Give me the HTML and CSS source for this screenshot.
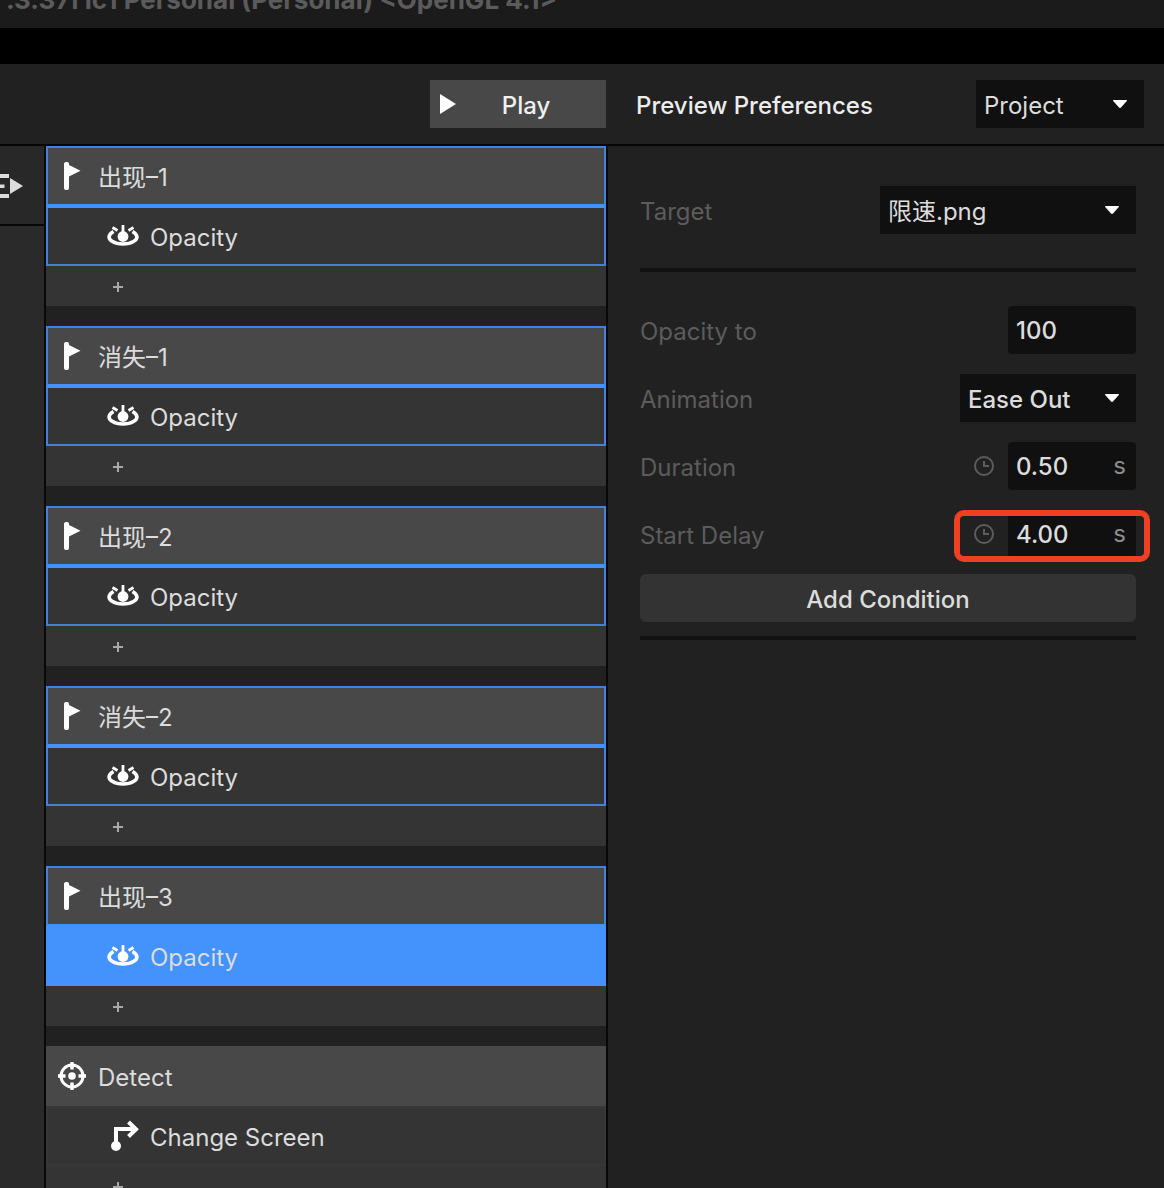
FILE: index.html
```html
<!DOCTYPE html>
<html lang="en">
<head>
<meta charset="utf-8">
<meta name="viewport" content="width=device-width, initial-scale=1">
<title>Interaction editor</title>
<link rel="stylesheet" href="styles.css">
</head>
<body>
<svg class="sprite" aria-hidden="true">
  <symbol id="flag" viewBox="0 0 28 28">
    <rect x="6" y="0" width="5" height="28" rx="2"/>
    <path d="M11 3L22.500 8.800L11 14.500z"/>
  </symbol>
  <symbol id="eye" viewBox="0 0 34 24">
    <path d="M7.500 7.500C1.500 11 2 15 6.500 17.500C12 20.800 22 20.800 27.500 17.500C32 15 32.500 11 26.500 7.500" fill="none" stroke="currentColor" stroke-width="3.600"/>
    <circle cx="17" cy="12.500" r="5.400"/>
    <path d="M17 1V10M6.500 3.500L11.500 6.500M27.500 3.500L22.500 6.500" fill="none" stroke="currentColor" stroke-width="2.800"/>
  </symbol>
  <symbol id="plus" viewBox="0 0 12 12">
    <path d="M6 1V11M1 6H11" fill="none" stroke="currentColor" stroke-width="2"/>
  </symbol>
  <symbol id="caret" viewBox="0 0 16 10">
    <path d="M1.500 1H14.500Q15.500 1.200 14.800 2L9 8.500Q8 9.400 7 8.500L1.200 2Q.5 1.200 1.500 1z"/>
  </symbol>
  <symbol id="clock" viewBox="0 0 20 20">
    <circle cx="10" cy="10" r="9" fill="none" stroke="currentColor" stroke-width="2"/>
    <path d="M10 5V10H15" fill="none" stroke="currentColor" stroke-width="2"/>
  </symbol>
</svg>

<div class="app">
  <header class="titlebar">.3.37f1c1 Personal (Personal) &lt;OpenGL 4.1&gt;</header>
  <div class="strip"></div>

  <div class="toolbar">
    <div class="toolbar-main">
      <button class="play" type="button">
        <svg class="play-icon" viewBox="0 0 16 20"><path d="M0 0L16 10L0 20z"/></svg>
        <span class="play-label">Play</span>
      </button>
    </div>
    <div class="toolbar-side">
      <label class="pref-label" for="prefs">Preview Preferences</label>
      <div class="select select-project">
        <select id="prefs"><option>Project</option></select>
        <svg class="caret"><use href="#caret"/></svg>
      </div>
    </div>
  </div>

  <div class="workspace">
    <nav class="rail" aria-label="Panels">
      <button class="rail-button" type="button" aria-label="Interactions">
        <svg class="rail-icon" viewBox="0 0 24 24"><path d="M0 0H9V4H0zM0 10.500H4.500V14H0zM0 20H9V24H0zM10 4L23 12L10 20z"/></svg>
      </button>
    </nav>

    <main class="list">
      <section class="group marked">
        <button class="row head" type="button"><svg class="icon-head"><use href="#flag"/></svg><span>出现–1</span></button>
        <button class="row child" type="button"><svg class="icon-child"><use href="#eye"/></svg><span>Opacity</span></button>
        <button class="add" type="button" aria-label="Add response"><svg class="icon-add"><use href="#plus"/></svg></button>
      </section>
      <section class="group marked">
        <button class="row head" type="button"><svg class="icon-head"><use href="#flag"/></svg><span>消失–1</span></button>
        <button class="row child" type="button"><svg class="icon-child"><use href="#eye"/></svg><span>Opacity</span></button>
        <button class="add" type="button" aria-label="Add response"><svg class="icon-add"><use href="#plus"/></svg></button>
      </section>
      <section class="group marked">
        <button class="row head" type="button"><svg class="icon-head"><use href="#flag"/></svg><span>出现–2</span></button>
        <button class="row child" type="button"><svg class="icon-child"><use href="#eye"/></svg><span>Opacity</span></button>
        <button class="add" type="button" aria-label="Add response"><svg class="icon-add"><use href="#plus"/></svg></button>
      </section>
      <section class="group marked">
        <button class="row head" type="button"><svg class="icon-head"><use href="#flag"/></svg><span>消失–2</span></button>
        <button class="row child" type="button"><svg class="icon-child"><use href="#eye"/></svg><span>Opacity</span></button>
        <button class="add" type="button" aria-label="Add response"><svg class="icon-add"><use href="#plus"/></svg></button>
      </section>
      <section class="group marked">
        <button class="row head" type="button"><svg class="icon-head"><use href="#flag"/></svg><span>出现–3</span></button>
        <button class="row child selected" type="button"><svg class="icon-child"><use href="#eye"/></svg><span>Opacity</span></button>
        <button class="add" type="button" aria-label="Add response"><svg class="icon-add"><use href="#plus"/></svg></button>
      </section>
      <section class="group">
        <button class="row head" type="button">
          <svg class="icon-head" viewBox="0 0 28 28">
            <circle cx="14" cy="14" r="11" fill="none" stroke="currentColor" stroke-width="3"/>
            <circle cx="14" cy="14" r="3.800"/>
            <path d="M14 0V7.500M14 20.500V28M0 14H7.500M20.500 14H28" fill="none" stroke="currentColor" stroke-width="3.400"/>
          </svg>
          <span>Detect</span>
        </button>
        <button class="row child" type="button">
          <svg class="icon-child icon-tall" viewBox="0 0 34 32">
            <circle cx="10" cy="26" r="5"/>
            <path d="M10 26V9H28" fill="none" stroke="currentColor" stroke-width="4"/>
            <path d="M22.500 2L30 9.300L22.500 16.500" fill="none" stroke="currentColor" stroke-width="4"/>
          </svg>
          <span>Change Screen</span>
        </button>
        <button class="add" type="button" aria-label="Add response"><svg class="icon-add"><use href="#plus"/></svg></button>
      </section>
    </main>

    <aside class="inspector">
      <div class="field">
        <label for="target">Target</label>
        <div class="select select-target">
          <select id="target"><option>限速.png</option></select>
          <svg class="caret"><use href="#caret"/></svg>
        </div>
      </div>
      <hr class="rule rule-wide">
      <div class="fields">
        <div class="field">
          <label for="opacity">Opacity to</label>
          <div class="number"><input id="opacity" type="text" value="100"></div>
        </div>
        <div class="field">
          <label for="easing">Animation</label>
          <div class="select select-easing">
            <select id="easing"><option>Ease Out</option></select>
            <svg class="caret"><use href="#caret"/></svg>
          </div>
        </div>
        <div class="field">
          <label for="duration">Duration</label>
          <div class="timed">
            <svg class="clock"><use href="#clock"/></svg>
            <div class="number"><input id="duration" type="text" value="0.50"><span class="unit">s</span></div>
          </div>
        </div>
        <div class="field">
          <label for="delay">Start Delay</label>
          <div class="timed highlighted">
            <svg class="clock"><use href="#clock"/></svg>
            <div class="number"><input id="delay" type="text" value="4.00"><span class="unit">s</span></div>
          </div>
        </div>
      </div>
      <button class="condition" type="button">Add Condition</button>
      <hr class="rule">
    </aside>
  </div>
</div>
</body>
</html>
```
FILE: styles.css
```css
* {
  box-sizing: border-box;
}

body {
  margin: 0;
  background: #212121;
  color: #dcdcdc;
  font: 24px/28px Inter, "Noto Sans CJK SC", sans-serif;
}

button,
input,
select {
  margin: 0;
  padding: 0;
  border: 0;
  border-radius: 0;
  background: none;
  color: inherit;
  font: inherit;
  text-align: left;
}

svg {
  display: block;
  flex: none;
  fill: currentColor;
}

.sprite {
  position: absolute;
  width: 0;
  height: 0;
}

.app {
  display: flex;
  flex-direction: column;
  height: 100vh;
  overflow: hidden;
}

/* Window title, partly scrolled out at the top */
.titlebar {
  display: flex;
  flex: none;
  align-items: flex-end;
  height: 28px;
  padding: 0 0 14px 6px;
  overflow: hidden;
  background: #1b1b1b;
  color: #5b5b5b;
  font-size: 26px;
  font-weight: 700;
  white-space: nowrap;
}

.strip {
  flex: none;
  height: 36px;
  background: #000;
}

.toolbar {
  display: flex;
  flex: none;
  height: 82px;
  border-bottom: 2px solid #060606;
}

.toolbar-main {
  display: flex;
  flex: 1;
  align-items: center;
  justify-content: flex-end;
}

.toolbar-side {
  display: flex;
  align-items: center;
  justify-content: space-between;
  width: 558px;
  padding: 0 20px 0 30px;
}

.play {
  display: flex;
  align-items: center;
  width: 176px;
  height: 48px;
  padding: 0 10px;
  background: #484848;
  color: #f0f0f0;
  font-weight: 500;
}

.play-icon {
  width: 16px;
  height: 20px;
  color: #fff;
}

.play-label {
  flex: 1;
  padding-top: 4px;
  text-align: center;
}

.pref-label {
  padding-top: 4px;
  color: #ececec;
  font-weight: 500;
}

.workspace {
  display: flex;
  flex: 1;
  min-height: 0;
}

.rail {
  flex: none;
  width: 46px;
  border-right: 2px solid #080808;
  background: #2a2a2a;
}

.rail-button {
  display: flex;
  align-items: center;
  width: 100%;
  height: 80px;
  padding-top: 2px;
  border-bottom: 2px solid #080808;
  background: #282828;
}

.rail-icon {
  width: 24px;
  height: 24px;
}

.list {
  display: flex;
  flex: 1;
  flex-direction: column;
  gap: 20px;
  min-width: 0;
  overflow: hidden;
}

.group {
  display: flex;
  flex: none;
  flex-direction: column;
}

.row {
  display: flex;
  align-items: center;
  height: 60px;
  border: 2px solid transparent;
}

.row span {
  padding-top: 4px;
}

.row svg {
  color: #fff;
}

.head {
  gap: 12px;
  padding-left: 10px;
  border-color: #484848;
  background: #484848;
}

.child {
  gap: 10px;
  padding-left: 58px;
  border-color: #373737;
  background: #343434;
}

.marked .row {
  border-color: #3f83de;
}

.marked .head {
  border-bottom-color: #4492fb;
}

.marked .child {
  border-top-color: #4492fb;
}

.marked .selected {
  border-color: #4492fb;
  background: #4492fb;
}

.icon-head {
  width: 28px;
  height: 28px;
}

.icon-child {
  width: 34px;
  height: 24px;
}

.icon-tall {
  height: 32px;
}

.add {
  display: flex;
  align-items: center;
  height: 40px;
  padding: 2px 0 0 66px;
  background: #343434;
  color: #a8a8a8;
}

.icon-add {
  width: 12px;
  height: 12px;
}

.inspector {
  flex: none;
  width: 558px;
  padding: 40px 28px 0 32px;
  border-left: 2px solid #080808;
}

.fields {
  display: flex;
  flex-direction: column;
  gap: 20px;
}

.field {
  display: flex;
  align-items: center;
  justify-content: space-between;
  height: 48px;
}

.field label {
  padding-top: 4px;
  color: #5c5c5c;
}

/* The caret shares the select's grid cell */
.select {
  display: grid;
  align-items: center;
  height: 48px;
  background: #101010;
  font-weight: 500;
}

.select select {
  grid-area: 1 / 1;
  width: 100%;
  height: 48px;
  padding: 4px 40px 0 8px;
  appearance: none;
}

.caret {
  grid-area: 1 / 1;
  justify-self: end;
  width: 16px;
  height: 10px;
  margin-right: 16px;
  color: #fff;
  pointer-events: none;
}

.select-project {
  width: 168px;
}

.select-target {
  width: 256px;
}

.select-easing {
  width: 176px;
}

.select-project,
.select-target {
  font-weight: 400;
}

.number {
  display: flex;
  align-items: center;
  width: 128px;
  height: 48px;
  padding: 0 10px 0 8px;
  border-radius: 4px;
  background: #101010;
}

.number input {
  flex: 1;
  min-width: 0;
  height: 48px;
  font-weight: 500;
}

.unit {
  color: #8c8c8c;
}

.timed {
  display: flex;
  align-items: center;
  gap: 14px;
}

.clock {
  width: 20px;
  height: 20px;
  color: #5c5c5c;
}

.highlighted {
  position: relative;
}

.highlighted::after {
  content: "";
  position: absolute;
  inset: 0 -14px -4px -20px;
  border: 6px solid #ee4023;
  border-radius: 10px;
  pointer-events: none;
}

.condition {
  display: block;
  width: 100%;
  height: 48px;
  margin-top: 16px;
  padding-top: 4px;
  border-radius: 6px;
  background: #333;
  font-weight: 500;
  text-align: center;
}

.rule {
  height: 4px;
  margin: 14px 0 0;
  border: 0;
  background: #121212;
}

.rule-wide {
  margin: 34px 0;
}
```
